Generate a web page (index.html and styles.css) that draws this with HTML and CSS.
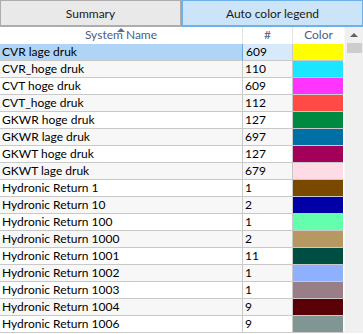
FILE: index.html
```html
<!DOCTYPE html>
<html lang="en">
<head>
    <meta charset="UTF-8">
    <title>Auto color legend</title>
    <link rel="stylesheet" href="styles.css">
</head>
<body>
    <div class="panel">
        <div class="tabs">
            <div class="tab">Summary</div>
            <div class="tab active">Auto color legend</div>
        </div>
        <div class="grid-area">
            <div class="grid">
                <div class="row head">
                    <div class="cell name"><span class="sort-arrow"></span>System Name</div>
                    <div class="cell count">#</div>
                    <div class="cell color">Color</div>
                </div>
                <div class="row selected">
                    <div class="cell name">CVR lage druk</div>
                    <div class="cell count">609</div>
                    <div class="cell swatch"><div class="fill" style="background:#ffff00"></div></div>
                </div>
                <div class="row">
                    <div class="cell name">CVR_hoge druk</div>
                    <div class="cell count">110</div>
                    <div class="cell swatch"><div class="fill" style="background:#1ce6ff"></div></div>
                </div>
                <div class="row">
                    <div class="cell name">CVT hoge druk</div>
                    <div class="cell count">609</div>
                    <div class="cell swatch"><div class="fill" style="background:#ff34ff"></div></div>
                </div>
                <div class="row">
                    <div class="cell name">CVT_hoge druk</div>
                    <div class="cell count">112</div>
                    <div class="cell swatch"><div class="fill" style="background:#ff4a46"></div></div>
                </div>
                <div class="row">
                    <div class="cell name">GKWR hoge druk</div>
                    <div class="cell count">127</div>
                    <div class="cell swatch"><div class="fill" style="background:#008941"></div></div>
                </div>
                <div class="row">
                    <div class="cell name">GKWR lage druk</div>
                    <div class="cell count">697</div>
                    <div class="cell swatch"><div class="fill" style="background:#006fa6"></div></div>
                </div>
                <div class="row">
                    <div class="cell name">GKWT hoge druk</div>
                    <div class="cell count">127</div>
                    <div class="cell swatch"><div class="fill" style="background:#a30059"></div></div>
                </div>
                <div class="row">
                    <div class="cell name">GKWT lage druk</div>
                    <div class="cell count">679</div>
                    <div class="cell swatch"><div class="fill" style="background:#ffdbe5"></div></div>
                </div>
                <div class="row">
                    <div class="cell name">Hydronic Return 1</div>
                    <div class="cell count">1</div>
                    <div class="cell swatch"><div class="fill" style="background:#7a4900"></div></div>
                </div>
                <div class="row">
                    <div class="cell name">Hydronic Return 10</div>
                    <div class="cell count">2</div>
                    <div class="cell swatch"><div class="fill" style="background:#0000a6"></div></div>
                </div>
                <div class="row">
                    <div class="cell name">Hydronic Return 100</div>
                    <div class="cell count">1</div>
                    <div class="cell swatch"><div class="fill" style="background:#63ffac"></div></div>
                </div>
                <div class="row">
                    <div class="cell name">Hydronic Return 1000</div>
                    <div class="cell count">2</div>
                    <div class="cell swatch"><div class="fill" style="background:#b79762"></div></div>
                </div>
                <div class="row">
                    <div class="cell name">Hydronic Return 1001</div>
                    <div class="cell count">11</div>
                    <div class="cell swatch"><div class="fill" style="background:#004d43"></div></div>
                </div>
                <div class="row">
                    <div class="cell name">Hydronic Return 1002</div>
                    <div class="cell count">1</div>
                    <div class="cell swatch"><div class="fill" style="background:#8fb0ff"></div></div>
                </div>
                <div class="row">
                    <div class="cell name">Hydronic Return 1003</div>
                    <div class="cell count">1</div>
                    <div class="cell swatch"><div class="fill" style="background:#997d87"></div></div>
                </div>
                <div class="row">
                    <div class="cell name">Hydronic Return 1004</div>
                    <div class="cell count">9</div>
                    <div class="cell swatch"><div class="fill" style="background:#5a0007"></div></div>
                </div>
                <div class="row">
                    <div class="cell name">Hydronic Return 1006</div>
                    <div class="cell count">9</div>
                    <div class="cell swatch"><div class="fill" style="background:#809693"></div></div>
                </div>
            </div>
            <div class="scrollbar">
                <div class="scroll-arrow"></div>
                <div class="scroll-thumb"></div>
            </div>
        </div>
    </div>
</body>
</html>
```

FILE: styles.css
```css
body {
    margin: 0;
    padding: 0;
    background-color: white;
    font-family: "Segoe UI", Lato, "Noto Sans", sans-serif;
    font-size: 12px;
    color: #000;
    overflow: hidden;
}
.panel {
    width: 363px;
    height: 334px;
    overflow: hidden;
}
.tabs {
    display: grid;
    grid-template-columns: 181px 182px;
}
.tab {
    box-sizing: border-box;
    height: 27px;
    display: flex;
    align-items: center;
    justify-content: center;
    background-color: #e9e9e9;
    border: 1px solid #adadad;
    border-bottom-width: 2px;
    color: #1a1a1a;
}
.tab.active {
    background-color: #cce4f7;
    border-color: #6eb1ea;
    border-left-width: 2px;
}
.grid-area {
    display: grid;
    grid-template-columns: 344px 19px;
}
.row {
    display: grid;
    grid-template-columns: 243px 50px 51px;
    height: 17px;
}
.cell {
    box-sizing: border-box;
    border-right: 1px solid #c9c9c9;
    border-bottom: 1px solid #c9c9c9;
    line-height: 16px;
    padding-left: 2px;
    white-space: nowrap;
    overflow: hidden;
}
.row:nth-child(odd) .cell {
    background-color: #f7f7f7;
}
.row.head .cell {
    background-color: white;
    border-bottom: none;
    border-right-color: #e3e3e3;
    color: #4d6082;
    text-align: center;
    padding-left: 0;
    position: relative;
}
.row.head .cell.color {
    border-right: none;
}
.sort-arrow {
    position: absolute;
    left: 117px;
    top: 1px;
    width: 0;
    height: 0;
    border-left: 4px solid transparent;
    border-right: 4px solid transparent;
    border-bottom: 4px solid #5b6f8a;
}
.row.selected .cell.name {
    background-color: #b0d4f6;
}
.row.selected .cell.count {
    background-color: #d7eafb;
    border-left: 1px solid #6ea8df;
    margin-left: -1px;
    padding-left: 3px;
}
.cell.swatch {
    padding: 0;
    border-right-color: white;
    background-color: white;
}
.row:nth-child(odd) .cell.swatch {
    background-color: white;
}
.fill {
    height: 100%;
}
.scrollbar {
    background-color: #f0f0f0;
    border-left: 1px solid #f7f7f7;
    display: flex;
    flex-direction: column;
    align-items: center;
}
.scroll-arrow {
    margin-top: 6px;
    width: 0;
    height: 0;
    border-left: 4px solid transparent;
    border-right: 4px solid transparent;
    border-bottom: 4px solid #606060;
}
.scroll-thumb {
    margin-top: 6px;
    width: 15px;
    height: 10px;
    background-color: #cdcdcd;
}
```
